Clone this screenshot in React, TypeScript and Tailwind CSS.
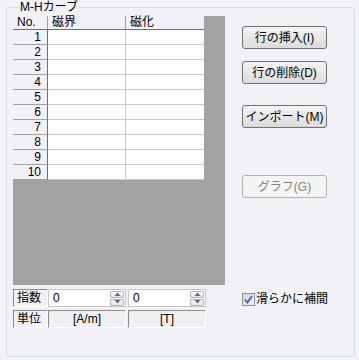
const rows = [1, 2, 3, 4, 5, 6, 7, 8, 9, 10];
const buttons = [
  { label: "行の挿入(I)", mt: "mt-[10px]" },
  { label: "行の削除(D)", mt: "mt-[12px]" },
  { label: "インポート(M)", mt: "mt-[21px]" },
];

const SpinBox = ({ value }: { value: string }) => {
  return (
    <div className="flex h-[18px] w-[78px] items-center justify-between border border-[#c9c9cc] bg-white pl-[4px] pr-[1px]">
      <span className="leading-[16px]">{value}</span>
      <div className="flex flex-col gap-[1px]">
        <div className="flex h-[7px] w-[14px] items-center justify-center rounded-[1px] border border-[#b4b8be] bg-gradient-to-b from-[#f6f6f6] to-[#e2e5ea]">
          <svg width="7" height="4" viewBox="0 0 7 4">
            <path d="M0.5 4 L3.5 0.5 L6.5 4 Z" fill="#5a6b8a" />
          </svg>
        </div>
        <div className="flex h-[7px] w-[14px] items-center justify-center rounded-[1px] border border-[#b4b8be] bg-gradient-to-b from-[#f6f6f6] to-[#e2e5ea]">
          <svg width="7" height="4" viewBox="0 0 7 4">
            <path d="M0.5 0 L6.5 0 L3.5 3.5 Z" fill="#5a6b8a" />
          </svg>
        </div>
      </div>
    </div>
  );
};

const App = () => {
  return (
    <div
      className="h-[360px] w-[359px] bg-[#f2f1f5] pb-[3px] pl-[6px] pr-[4px] text-[12px] text-black"
      style={{ fontFamily: '"Liberation Sans", "Noto Sans CJK JP", sans-serif' }}
    >
      <fieldset className="h-full rounded-[3px] border border-[#d3dde4] pl-[6px] pt-[2px]">
        <legend className="ml-[6px] px-[1px] leading-[14px]">M-Hカーブ</legend>

        {/* top: table + buttons */}
        <div className="flex">
          <div className="h-[269px] w-[212px] bg-[#a4a2a5]">
            <div className="w-[191px]">
              <div className="flex h-[14px] border-b border-[#6e6e6e] bg-[#f2f1f5] leading-[13px]">
                <div className="w-[35px] border-r border-[#a0a0a0] pl-[4px]">No.</div>
                <div className="w-[78px] border-r border-[#a0a0a0] pl-[4px]">磁界</div>
                <div className="w-[78px] pl-[4px]">磁化</div>
              </div>
              {rows.map((n) => (
                <div key={n} className="flex h-[15px] leading-[14px]">
                  <div className="w-[35px] border-b border-r border-b-[#a0a0a0] border-r-[#6e6e6e] bg-[#f2f1f5] pr-[6px] text-right">
                    {n}
                  </div>
                  <div className="w-[78px] border-b border-r border-[#c9c9c9] bg-[#fdfffd]"></div>
                  <div className="w-[78px] border-b border-[#c9c9c9] bg-[#fdfffd]"></div>
                </div>
              ))}
            </div>
          </div>

          <div className="ml-[17px] flex flex-col">
            {buttons.map((b) => (
              <button
                key={b.label}
                className={`${b.mt} h-[23px] w-[85px] rounded-[3px] border border-[#707070] bg-gradient-to-b from-[#f3f3f3] to-[#dcdcdc] leading-[20px]`}
              >
                {b.label}
              </button>
            ))}
            <button className="mt-[47px] h-[23px] w-[85px] rounded-[3px] border border-[#adb2b5] bg-[#f4f4f4] leading-[20px] text-[#838383]">
              グラフ(G)
            </button>
          </div>
        </div>

        {/* bottom: exponent / unit + checkbox */}
        <div className="mt-[4px] flex">
          <div className="flex w-[212px] flex-col gap-[3px]">
            <div className="flex">
              <div className="h-[18px] w-[35px] border border-b-white border-l-[#8a8a8a] border-r-white border-t-[#8a8a8a] pl-[3px] leading-[16px]">
                指数
              </div>
              <SpinBox value="0" />
              <div className="ml-[2px]">
                <SpinBox value="0" />
              </div>
            </div>
            <div className="flex">
              <div className="h-[18px] w-[35px] border border-b-white border-l-[#8a8a8a] border-r-white border-t-[#8a8a8a] pl-[3px] leading-[16px]">
                単位
              </div>
              <div className="h-[18px] w-[78px] border border-b-white border-l-[#8a8a8a] border-r-white border-t-[#8a8a8a] bg-[#f0eff2] text-center leading-[16px]">
                [A/m]
              </div>
              <div className="ml-[2px] h-[18px] w-[78px] border border-b-white border-l-[#8a8a8a] border-r-white border-t-[#8a8a8a] bg-[#f0eff2] text-center leading-[16px]">
                [T]
              </div>
            </div>
          </div>

          <label className="ml-[17px] mt-[3px] flex h-[14px] items-center gap-[1px]">
            <span className="flex h-[13px] w-[13px] items-center justify-center border border-[#8f8f8f] bg-gradient-to-br from-[#cfd4dc] to-[#f4f6f9]">
              <svg width="9" height="9" viewBox="0 0 9 9">
                <path d="M1 4.5 L3.5 7.5 L8 1" stroke="#4a5f97" strokeWidth="1.8" fill="none" />
              </svg>
            </span>
            <span className="leading-[14px]">滑らかに補間</span>
          </label>
        </div>
      </fieldset>
    </div>
  );
};

export default App;
